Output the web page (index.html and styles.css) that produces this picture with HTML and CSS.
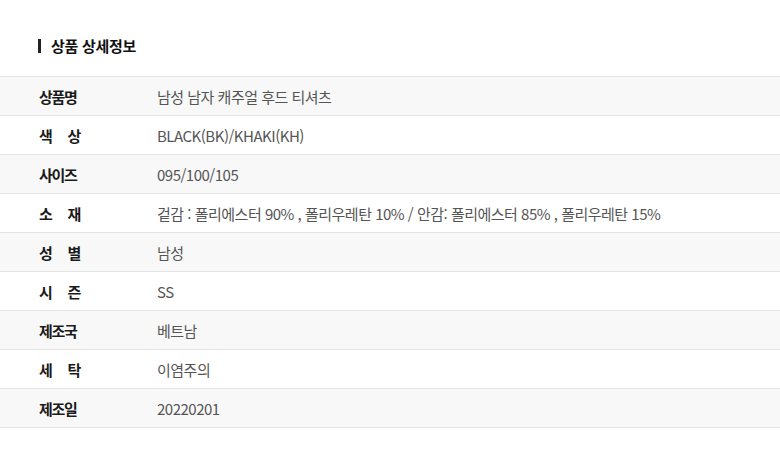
FILE: index.html
```html
<!DOCTYPE html>
<html lang="ko">
<head>
<meta charset="utf-8">
<link rel="stylesheet" href="styles.css">
</head>
<body>
<section class="detail">
  <h2 class="title">상품 상세정보</h2>
  <table class="info">
    <tr><th><span class="lbl">상품명</span></th><td>남성 남자 캐주얼 후드 티셔츠</td></tr>
    <tr><th><span class="lbl"><span>색</span><span>상</span></span></th><td>BLACK(BK)/KHAKI(KH)</td></tr>
    <tr><th><span class="lbl">사이즈</span></th><td>095/100/105</td></tr>
    <tr><th><span class="lbl"><span>소</span><span>재</span></span></th><td>겉감 : 폴리에스터 90% , 폴리우레탄 10% / 안감: 폴리에스터 85% , 폴리우레탄 15%</td></tr>
    <tr><th><span class="lbl"><span>성</span><span>별</span></span></th><td>남성</td></tr>
    <tr><th><span class="lbl"><span>시</span><span>즌</span></span></th><td>SS</td></tr>
    <tr><th><span class="lbl">제조국</span></th><td>베트남</td></tr>
    <tr><th><span class="lbl"><span>세</span><span>탁</span></span></th><td>이염주의</td></tr>
    <tr><th><span class="lbl">제조일</span></th><td>20220201</td></tr>
  </table>
</section>
</body>
</html>
```
FILE: styles.css
```css
* { box-sizing: border-box; }
html, body { margin: 0; padding: 0; background: #fff; }
body {
  font-family: "Noto Sans CJK KR", "Noto Sans", sans-serif;
  color: #222;
}
.detail { padding-top: 39px; }
.title {
  margin: 0 0 23px 38px;
  padding-left: 10px;
  border-left: 3px solid #222;
  font-size: 15px;
  font-weight: 700;
  line-height: 14px;
  height: 14px;
  color: #111;
  display: flex;
  align-items: center;
  letter-spacing: -0.3px;
}
.info {
  width: 100%;
  border-collapse: collapse;
  border-top: 1px solid #e4e4e4;
}
.info tr { border-bottom: 1px solid #e4e4e4; height: 39px; }
.info tr:nth-child(odd) { background: #f8f8f8; }
.info th {
  width: 157px;
  padding: 0 0 0 39px;
  text-align: left;
  font-size: 15px;
  font-weight: 700;
  color: #1a1a1a;
  vertical-align: middle;
  white-space: nowrap;
}
.lbl {
  display: inline-flex;
  justify-content: space-between;
  width: 41px;
  letter-spacing: -1.3px;
}
.info td {
  padding: 0;
  font-size: 15px;
  font-weight: 400;
  color: #555;
  vertical-align: middle;
  letter-spacing: -0.5px;
  white-space: nowrap;
}
```
